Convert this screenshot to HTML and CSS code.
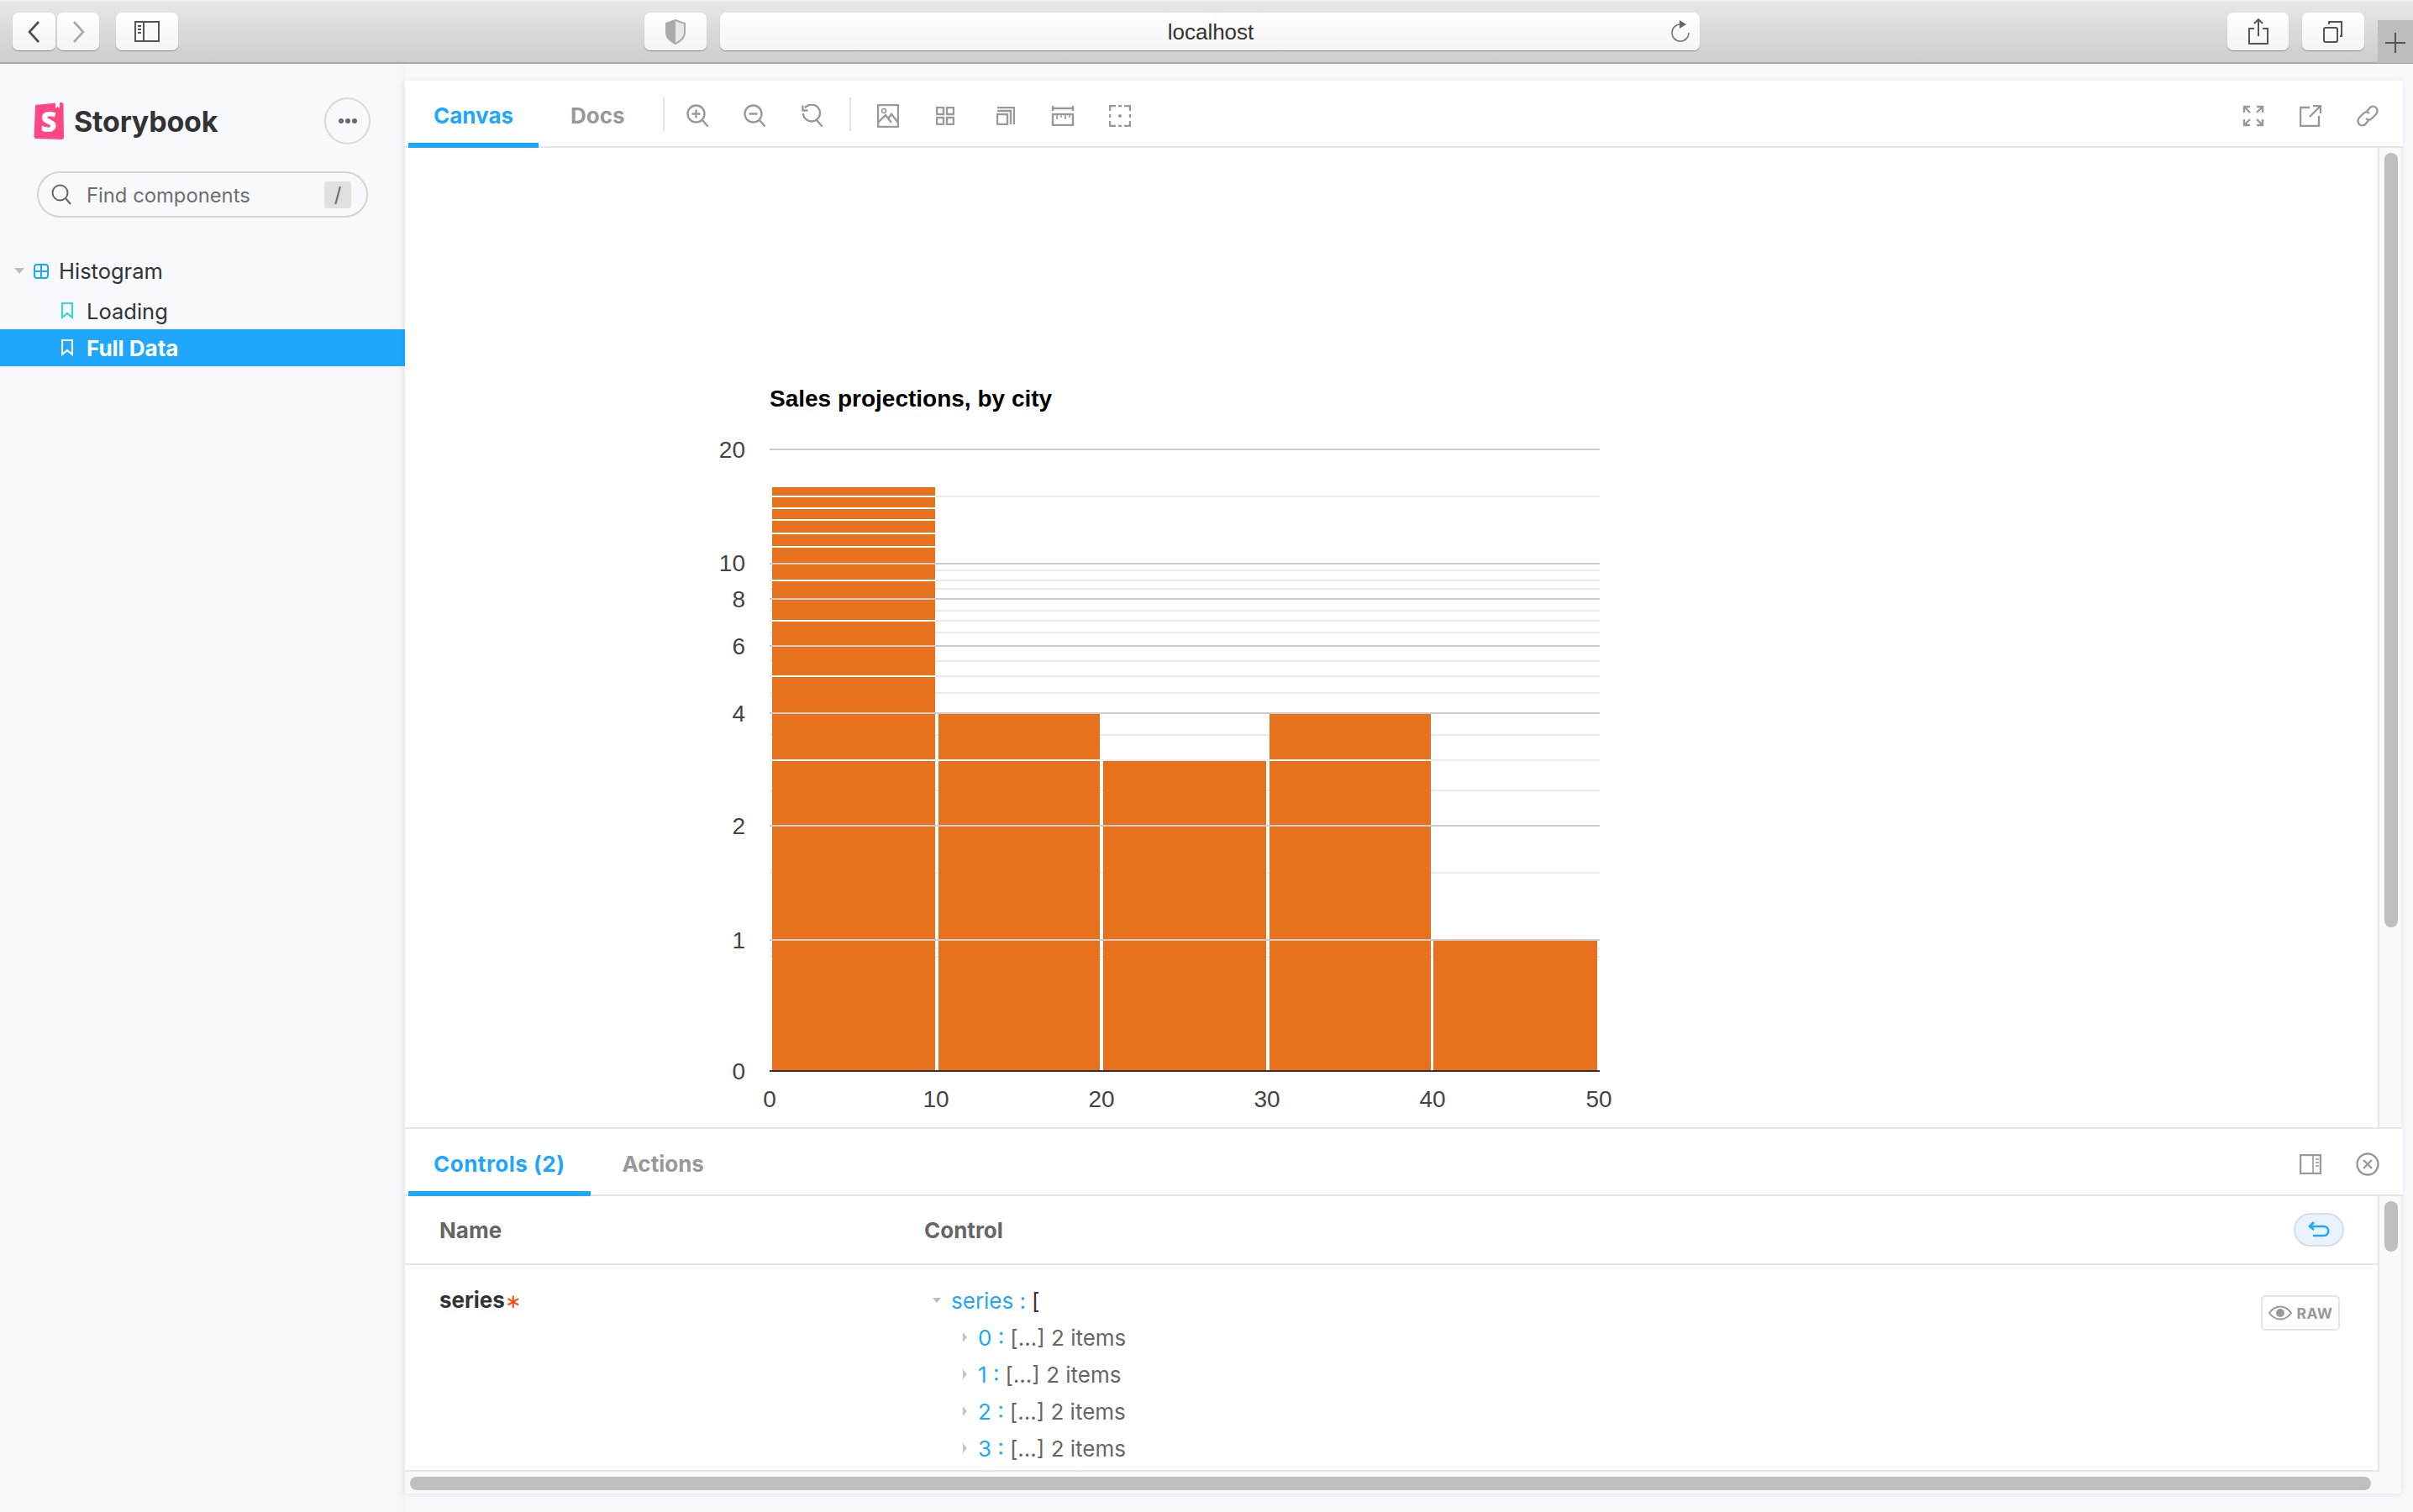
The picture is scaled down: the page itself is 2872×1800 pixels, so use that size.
FILE: index.html
```html
<!DOCTYPE html>
<html lang="en">
<head>
<meta charset="utf-8">
<title>Storybook</title>
<link rel="stylesheet" href="styles.css">
</head>
<body>
<header class="browser">
  <div class="bbtn back"><svg width="15" height="26" viewBox="0 0 15 26"><path d="M13 1 2 13l11 12" class="chev dark"/></svg></div>
  <div class="bbtn fwd"><svg width="15" height="26" viewBox="0 0 15 26"><path d="M2 1l11 12L2 25" class="chev light"/></svg></div>
  <div class="bbtn side"><svg width="30" height="25" viewBox="0 0 30 25"><rect x="1" y="1" width="28" height="23" class="bline"/><path d="M11 1v23" class="bline"/><path d="M4 6h4M4 10h4M4 14h4" class="bline"/></svg></div>
  <div class="bbtn shield"><svg width="26" height="30" viewBox="0 0 26 30"><path d="M13 1 2 5v11c0 6 5 10 11 13 6-3 11-7 11-13V5z" class="sh-o"/><path d="M13 1 2 5v11c0 6 5 10 11 13z" class="sh-f"/></svg></div>
  <div class="url"><span class="url-text">localhost</span><svg class="reload" width="24" height="26" viewBox="0 0 24 26"><path d="M13 5A10 10 0 1 0 23 15" class="bline thin"/><path d="M12 0l8 5-8 5z" class="rel-a"/></svg></div>
  <div class="bbtn share"><svg width="26" height="32" viewBox="0 0 26 32"><path d="M8 12H2v18h22V12h-6M13 21V1M8 6l5-5 5 5" class="bline"/></svg></div>
  <div class="bbtn tabs"><svg width="26" height="26" viewBox="0 0 26 26"><rect x="2" y="8" width="16" height="17" rx="2" class="bline"/><path d="M8 4V1h15v17h-2" class="bline"/></svg></div>
  <div class="newtab"><span class="plus"></span></div>
</header>

<div class="app">
  <aside class="sidebar">
    <div class="brand">
      <svg class="logo" width="36" height="44" viewBox="0 0 36 44">
        <path d="M2 3 33 0c1.500 0 2.500 1 2.500 2.500L36 41c0 2-1 3-3 3L3 43c-1.500 0-2.500-1-2.500-2.500z" class="logo-bg"/>
        <path d="M26 0v7l2.500-2 2.500 2V0z" class="logo-w"/>
        <text x="18" y="35" class="logo-s">S</text>
      </svg>
      <span class="brand-name">Storybook</span>
      <div class="menu"><span class="dot"></span><span class="dot"></span><span class="dot"></span></div>
    </div>
    <div class="search">
      <svg width="24" height="26" viewBox="0 0 24 26"><circle cx="10.500" cy="10.500" r="9" class="s-line"/><path d="M17 17l6 7" class="s-line"/></svg>
      <span class="search-text">Find components</span>
      <span class="key">/</span>
    </div>
    <nav class="tree">
      <div class="node comp">
        <span class="caret"></span>
        <svg width="18" height="18" viewBox="0 0 18 18"><rect x="1" y="1" width="16" height="16" rx="3" class="grid-i"/><path d="M9 1v16M1 9h16" class="grid-i"/></svg>
        <span>Histogram</span>
      </div>
      <div class="node story">
        <svg width="14" height="20" viewBox="0 0 14 20"><path d="M1 1h12v17l-6-5-6 5z" class="book teal"/></svg>
        <span>Loading</span>
      </div>
      <div class="node story active">
        <svg width="14" height="20" viewBox="0 0 14 20"><path d="M1 1h12v17l-6-5-6 5z" class="book white"/></svg>
        <span>Full Data</span>
      </div>
    </nav>
  </aside>

  <main class="main">
    <div class="bar">
      <div class="tab on">Canvas</div>
      <div class="tab">Docs</div>
      <span class="divider first"></span>
      <div class="tool"><svg width="28" height="28" viewBox="0 0 28 28"><circle cx="11.500" cy="11.500" r="10" class="i"/><path d="M18.500 18.500l7 8M11.500 6.500v10M6.500 11.500h10" class="i"/></svg></div>
      <div class="tool"><svg width="28" height="28" viewBox="0 0 28 28"><circle cx="11.500" cy="11.500" r="10" class="i"/><path d="M18.500 18.500l7 8M6.500 11.500h10" class="i"/></svg></div>
      <div class="tool"><svg width="28" height="28" viewBox="0 0 28 28"><path d="M5 4.500A10 10 0 1 1 3 11M18.500 18.500l7 8" class="i"/><path d="M2.500 1.500v6h6" class="i"/></svg></div>
      <span class="divider"></span>
      <div class="tool"><svg width="26" height="28" viewBox="0 0 26 28"><rect x="1" y="1" width="24" height="26" class="i"/><circle cx="8" cy="8" r="2.500" class="i thin"/><path d="M1 22l9-9 7 9M13 17l4-5 8 10" class="i"/></svg></div>
      <div class="tool"><svg width="22" height="22" viewBox="0 0 22 22"><rect x="1" y="1" width="8" height="8" class="i"/><rect x="13" y="1" width="8" height="8" class="i"/><rect x="1" y="13" width="8" height="8" class="i"/><rect x="13" y="13" width="8" height="8" class="i"/></svg></div>
      <div class="tool nudge"><svg width="22" height="22" viewBox="0 0 22 22"><rect x="1" y="9" width="12" height="12" class="i"/><path d="M1 5h16v16M1 1h20v20" class="i"/></svg></div>
      <div class="tool"><svg width="28" height="24" viewBox="0 0 28 24"><path d="M2 0v6M26 0v6M2 3h24" class="i"/><rect x="2" y="10" width="24" height="13" class="i"/><path d="M7 11v5M12 11v3M17 11v5M22 11v3" class="i thin"/></svg></div>
      <div class="tool"><svg width="26" height="26" viewBox="0 0 26 26"><path d="M1 7V1h7M18 1h7v6M25 19v6h-7M8 25H1v-6M1 11v4M25 11v4M11 1h4M11 25h4" class="i"/><circle cx="13" cy="13" r="2" class="dotfill"/></svg></div>
      <div class="spacer"></div>
      <div class="tool"><svg width="26" height="26" viewBox="0 0 26 26"><path d="M2 9V2h7M2 2l7 7M17 2h7v7M24 2l-7 7M24 17v7h-7M24 24l-7-7M9 24H2v-7M2 24l7-7" class="i"/></svg></div>
      <div class="tool"><svg width="26" height="26" viewBox="0 0 26 26"><path d="M12 3H1v22h22V13M12 14 24 2M16 1h9v9" class="i"/></svg></div>
      <div class="tool"><svg width="26" height="26" viewBox="0 0 26 26"><path d="M11 9l4-5c2-3 6-3 8-1s2 6 0 8l-5 5c-2 2-5 2-7 0" class="i"/><path d="M15 17l-4 5c-2 3-6 3-8 1s-2-6 0-8l5-5c2-2 5-2 7 0" class="i"/></svg></div>
    </div>

    <div class="row preview-row">
      <section class="preview">
        <svg class="chart" width="1100" height="900" viewBox="840 440 1100 900">
          <text x="916" y="484" class="title">Sales projections, by city</text>
          <g class="minor">
            <rect x="916" y="590" width="988" height="2"/><rect x="916" y="678" width="988" height="2"/><rect x="916" y="690" width="988" height="2"/><rect x="916" y="700" width="988" height="2"/><rect x="916" y="726" width="988" height="2"/><rect x="916" y="738" width="988" height="2"/><rect x="916" y="752" width="988" height="2"/><rect x="916" y="786" width="988" height="2"/><rect x="916" y="804" width="988" height="2"/><rect x="916" y="824" width="988" height="2"/><rect x="916" y="874" width="988" height="2"/><rect x="916" y="904" width="988" height="2"/><rect x="916" y="940" width="988" height="2"/><rect x="916" y="1038" width="988" height="2"/><rect x="916" y="1128" width="988" height="2"/><rect x="916" y="1138" width="988" height="2"/>
          </g>
          <g class="bars">
            <rect x="919" y="580" width="194" height="694"/><rect x="1117" y="850" width="192" height="424"/><rect x="1313" y="906" width="194" height="368"/><rect x="1511" y="850" width="192" height="424"/><rect x="1706" y="1120" width="195" height="154"/>
          </g>
          <g class="gaps">
            <rect x="919" y="590" width="194" height="2"/><rect x="919" y="604" width="194" height="2"/><rect x="919" y="618" width="194" height="2"/><rect x="919" y="634" width="194" height="2"/><rect x="919" y="650" width="194" height="2"/><rect x="919" y="690" width="194" height="2"/><rect x="919" y="738" width="194" height="2"/><rect x="919" y="804" width="194" height="2"/><rect x="919" y="904" width="194" height="2"/><rect x="1117" y="904" width="192" height="2"/><rect x="1511" y="904" width="192" height="2"/>
          </g>
          <g class="major">
            <rect x="916" y="534" width="988" height="2"/><rect x="916" y="670" width="988" height="2"/><rect x="916" y="712" width="988" height="2"/><rect x="916" y="768" width="988" height="2"/><rect x="916" y="848" width="988" height="2"/><rect x="916" y="982" width="988" height="2"/><rect x="916" y="1118" width="988" height="2"/>
          </g>
          <rect x="916" y="1274" width="988" height="2" class="axis"/>
          <g class="ylabels">
            <text x="887" y="545">20</text><text x="887" y="680">10</text><text x="887" y="723">8</text><text x="887" y="779">6</text><text x="887" y="859">4</text><text x="887" y="993">2</text><text x="887" y="1129">1</text><text x="887" y="1285">0</text>
          </g>
          <g class="xlabels">
            <text x="916" y="1318">0</text><text x="1114" y="1318">10</text><text x="1311" y="1318">20</text><text x="1508" y="1318">30</text><text x="1705" y="1318">40</text><text x="1903" y="1318">50</text>
          </g>
        </svg>
      </section>
      <div class="vtrack"><div class="vthumb big"></div></div>
    </div>

    <div class="bar addons">
      <div class="tab on">Controls (2)</div>
      <div class="tab">Actions</div>
      <div class="spacer"></div>
      <div class="tool"><svg width="26" height="24" viewBox="0 0 26 24"><rect x="1" y="1" width="24" height="22" class="i"/><path d="M16 1v22M19 6h4M19 10h4M19 14h4" class="i thin"/></svg></div>
      <div class="tool"><svg width="28" height="28" viewBox="0 0 28 28"><circle cx="14" cy="14" r="12.500" class="i"/><path d="M9 9l10 10M19 9 9 19" class="i"/></svg></div>
    </div>

    <div class="row addon-row">
      <section class="controls">
        <div class="thead">
          <span class="col-name">Name</span>
          <span class="col-control">Control</span>
          <div class="reset"><svg width="26" height="20" viewBox="0 0 26 20"><path d="M2 6h17c7 0 7 11 0 11H6M7 1 2 6l5 4" class="undo"/></svg></div>
        </div>
        <div class="tbody">
          <div class="name">series<span class="req">∗</span></div>
          <div class="json">
            <div class="j-row root"><span class="caret small"></span><span class="key-b">series :</span> <span class="brk">[</span></div>
            <div class="j-row item"><span class="caret right"></span><span class="key-b">0 :</span> <span class="val">[...] 2 items</span></div>
            <div class="j-row item"><span class="caret right"></span><span class="key-b">1 :</span> <span class="val">[...] 2 items</span></div>
            <div class="j-row item"><span class="caret right"></span><span class="key-b">2 :</span> <span class="val">[...] 2 items</span></div>
            <div class="j-row item"><span class="caret right"></span><span class="key-b">3 :</span> <span class="val">[...] 2 items</span></div>
          </div>
          <div class="raw"><svg width="28" height="18" viewBox="0 0 28 18"><path d="M1 9c7-10 19-10 26 0-7 10-19 10-26 0z" class="eye"/><circle cx="14" cy="9" r="5" class="eye-f"/></svg><span>RAW</span></div>
        </div>
      </section>
      <div class="vtrack"><div class="vthumb small"></div></div>
    </div>
    <div class="htrack"><div class="hthumb"></div></div>
  </main>
</div>
</body>
</html>
```
FILE: styles.css
```css
* { box-sizing: border-box; }
html, body { margin: 0; height: 1800px; overflow: hidden; }
body { background: #f7f9fd; font-family: Inter, "Liberation Sans", sans-serif; color: #333; }
svg { display: block; flex: none; }

/* browser chrome */
.browser { position: relative; height: 76px; display: flex; padding-top: 15px; background: linear-gradient(#e7e7e7, #cdcdcd); border-top: 2px solid #efefef; border-bottom: 2px solid #a9a9a9; }
.bbtn, .url { height: 45px; margin-top: -2px; background: linear-gradient(#fff, #f4f4f4); border-radius: 7px; box-shadow: 0 1px 1px rgba(0,0,0,.35); display: flex; align-items: center; justify-content: center; }
.back { width: 51px; margin-left: 15px; }
.fwd { width: 50px; margin-left: 2px; }
.side { width: 74px; margin-left: 20px; }
.shield { width: 74px; margin-left: 555px; }
.url { width: 1166px; margin-left: 16px; position: relative; padding-top: 2px; padding-left: 2px; }
.url-text { font: 26px "Liberation Sans", sans-serif; color: #333; }
.reload { position: absolute; right: 12px; top: 9px; }
.share { width: 73px; margin-left: 628px; }
.tabs { width: 74px; margin-left: 16px; }
.newtab { position: absolute; right: 0; top: 22px; width: 42px; height: 51px; background: #bdbdbd; display: flex; align-items: center; justify-content: center; }
.plus { width: 24px; height: 24px; margin-top: 2px; background: linear-gradient(#555, #555) center/24px 2px no-repeat, linear-gradient(#555, #555) center/2px 24px no-repeat; }
.chev { fill: none; stroke-width: 2.600; }
.chev.dark { stroke: #4d4d4d; }
.chev.light { stroke: #a8a8a8; }
.bline { fill: none; stroke: #555; stroke-width: 2; }
.bline.thin { stroke: #777; stroke-width: 1.600; }
.rel-a { fill: #666; }
.sh-o { fill: #e8e8e8; stroke: #ababab; stroke-width: 2; }
.sh-f { fill: #ababab; }

/* app */
.app { display: flex; height: 1724px; }
.sidebar { width: 482px; flex: none; background: linear-gradient(90deg, #f7f9fd 97%, #f2f4f8); }
.brand { display: flex; align-items: center; height: 56px; margin-top: 40px; padding-left: 40px; }
.brand-name { margin-left: 12px; font-size: 34px; font-weight: 700; letter-spacing: -.2px; color: #333; }
.logo-bg { fill: #ff4785; }
.logo-w { fill: #fff; }
.logo-s { font: 800 33px "Open Sans", sans-serif; fill: #fff; text-anchor: middle; }
.menu { width: 55px; height: 56px; margin-left: auto; margin-right: 41px; border: 2px solid #d9d9d9; border-radius: 50%; display: flex; align-items: center; justify-content: center; gap: 2px; }
.dot { width: 6px; height: 6px; border-radius: 50%; background: #666; }
.search { width: 394px; height: 55px; margin: 32px 0 0 44px; border: 2px solid #d4d4d6; border-radius: 28px; display: flex; align-items: center; padding-left: 15px; }
.search-text { margin-left: 18px; margin-top: 2px; font-size: 23.800px; color: #6f6f6f; }
.key { width: 32px; height: 32px; margin-left: auto; margin-right: 18px; background: #e0e0e0; border-radius: 3px; font-size: 24px; color: #666; text-align: center; line-height: 32px; }
.s-line { fill: none; stroke: #666; stroke-width: 2; }
.tree { margin-top: 42px; }
.node { display: flex; align-items: center; font-size: 25.500px; color: #333; }
.comp { height: 47px; padding-left: 17px; padding-bottom: 4px; }
.comp svg { margin-left: 11px; margin-right: 12px; }
.story { height: 44px; padding-left: 73px; }
.story svg { margin-right: 16px; }
.active { background: #1ea7fd; color: #fff; font-weight: 700; font-size: 26px; }
.caret { width: 0; height: 0; flex: none; border-left: 6px solid transparent; border-right: 6px solid transparent; border-top: 7px solid #bdbdbd; }
.caret.small { border-left-width: 5px; border-right-width: 5px; border-top-width: 6px; }
.caret.right { border-top: 6px solid transparent; border-bottom: 6px solid transparent; border-left: 5px solid #c4c4c4; border-right: 0; }
.grid-i { fill: none; stroke: #1ea7fd; stroke-width: 2; }
.book { fill: none; stroke-width: 2.200; }
.teal { stroke: #37d5d3; }
.white { stroke: #fff; }

/* main */
.main { width: 2376px; height: 1682px; margin-top: 20px; background: #fff; box-shadow: 0 1px 8px rgba(0,0,0,.09); display: flex; flex-direction: column; }
.bar { width: 2378px; height: 80px; flex: none; display: flex; align-items: center; padding: 6px 0 0 4px; background: #fff; border-bottom: 2px solid #e6e6e6; }
.tab { height: 80px; align-self: flex-end; padding: 2px 30px 0; margin-bottom: -2px; font-size: 26px; font-weight: 700; color: #999; display: flex; align-items: center; }
.tab.on { color: #1ea7fd; border-bottom: 6px solid #1ea7fd; padding-top: 8px; }
.bar .tab:nth-child(2) { padding-left: 38px; padding-right: 36px; }
.divider { width: 2px; height: 40px; margin: -4px 10px 0; background: #e6e6e6; }
.divider.first { margin-left: 9px; margin-right: 6px; }
.tool { width: 68px; height: 60px; flex: none; display: flex; align-items: center; justify-content: center; }
.tool.nudge { margin-left: 4px; }
.spacer { flex: 1; }
.bar > .tool:last-child { margin-right: 8px; }
.i { fill: none; stroke: #999; stroke-width: 2.400; }
.i.thin { stroke-width: 1.600; }
.dotfill { fill: #999; }

.row { display: flex; }
.preview-row { height: 1168px; }
.preview { flex: 1; border-right: 2px solid #e6e6e6; border-bottom: 2px solid #e6e6e6; padding: 264px 0 0 358px; overflow: hidden; }
.vtrack { width: 26px; flex: none; background: #f9f9f9; padding: 6px 4px 0 6px; }
.vthumb { width: 16px; background: #bfbfbf; border-radius: 8px; }
.vthumb.big { height: 922px; }
.vthumb.small { height: 60px; }
.preview-row .vtrack { border-bottom: 2px solid #e6e6e6; }

.chart { display: block; }
.title { font: 700 28px "Liberation Sans", sans-serif; fill: #000; }
.minor rect { fill: #ebebeb; }
.bars rect { fill: #e7711c; }
.gaps rect { fill: #fff; }
.major rect { fill: #ccc; }
.axis { fill: #333; }
.ylabels text { font: 28px "Liberation Sans", sans-serif; fill: #444; text-anchor: end; }
.xlabels text { font: 28px "Liberation Sans", sans-serif; fill: #444; text-anchor: middle; }

.addons { height: 80px; }
.addons .tab.on { letter-spacing: .5px; }
.addons .tab:nth-child(2) { padding-left: 38px; }
.addon-row { height: 328px; }
.controls { flex: 1; border-right: 2px solid #e6e6e6; border-bottom: 2px solid #e6e6e6; overflow: hidden; }
.thead { height: 82px; display: flex; align-items: center; border-bottom: 2px solid #e6e6e6; font-size: 26px; font-weight: 700; color: #666; }
.col-name { width: 577px; margin-left: 41px; }
.reset { width: 60px; height: 40px; margin-left: auto; margin-right: 40px; background: #eaf3fc; border: 2px solid #d5dfe9; border-radius: 20px; display: flex; align-items: center; justify-content: center; }
.undo { fill: none; stroke: #1ea7fd; stroke-width: 2.600; }
.tbody { display: flex; position: relative; padding-top: 20px; }
.name { width: 575px; margin-left: 41px; font-size: 26px; font-weight: 700; color: #333; line-height: 44px; }
.req { color: #ff4400; font: 400 23px "DejaVu Sans", sans-serif; }
.json { font-size: 26px; color: #666; }
.j-row { display: flex; align-items: center; gap: 7px; height: 44px; white-space: pre; }
.root { padding-left: 12px; }
.root .caret { margin-right: 5px; }
.item { padding-left: 48px; }
.item .caret { margin-right: 6px; }
.key-b { color: #1ea7fd; }
.brk { color: #333; }
.raw { position: absolute; right: 45px; top: 36px; width: 94px; height: 42px; border: 2px solid #e6e6e6; border-radius: 5px; display: flex; align-items: center; justify-content: center; gap: 6px; font-size: 17.500px; font-weight: 700; color: #999; letter-spacing: .5px; }
.eye { fill: none; stroke: #999; stroke-width: 2; }
.eye-f { fill: #999; }

.htrack { height: 26px; flex: none; background: #f9f9f9; padding: 6px 0 0 6px; }
.hthumb { width: 2334px; height: 16px; border-radius: 8px; background: #bfbfbf; }
```
